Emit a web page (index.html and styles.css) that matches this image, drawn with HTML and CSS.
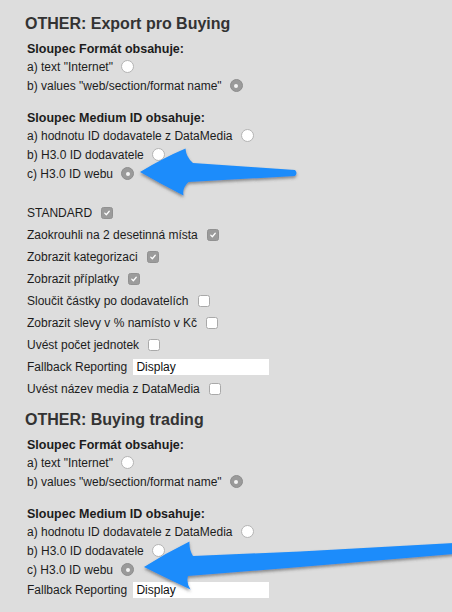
FILE: index.html
```html
<!DOCTYPE html>
<html lang="cs">
<head>
<meta charset="utf-8">
<title>OTHER</title>
<link rel="stylesheet" href="styles.css">
</head>
<body>
<div class="page">
  <section class="block">
    <h2 class="title">OTHER: Export pro Buying</h2>
    <div class="group">
      <div class="group-title">Sloupec Formát obsahuje:</div>
      <div class="opt">a) text "Internet" <span class="radio"></span></div>
      <div class="opt">b) values "web/section/format name" <span class="radio on"></span></div>
    </div>
    <div class="group">
      <div class="group-title">Sloupec Medium ID obsahuje:</div>
      <div class="opt">a) hodnotu ID dodavatele z DataMedia <span class="radio"></span></div>
      <div class="opt">b) H3.0 ID dodavatele <span class="radio"></span></div>
      <div class="opt">c) H3.0 ID webu <span class="radio on"></span></div>
    </div>
    <div class="checks">
      <div class="chk-row">STANDARD <span class="cb on"><svg viewBox="0 0 12 12"><path d="M3.3 6.2 L5.2 8.1 L8.7 3.9"/></svg></span></div>
      <div class="chk-row">Zaokrouhli na 2 desetinná místa <span class="cb on"><svg viewBox="0 0 12 12"><path d="M3.3 6.2 L5.2 8.1 L8.7 3.9"/></svg></span></div>
      <div class="chk-row">Zobrazit kategorizaci <span class="cb on"><svg viewBox="0 0 12 12"><path d="M3.3 6.2 L5.2 8.1 L8.7 3.9"/></svg></span></div>
      <div class="chk-row">Zobrazit příplatky <span class="cb on"><svg viewBox="0 0 12 12"><path d="M3.3 6.2 L5.2 8.1 L8.7 3.9"/></svg></span></div>
      <div class="chk-row">Sloučit částky po dodavatelích <span class="cb"></span></div>
      <div class="chk-row">Zobrazit slevy v % namísto v Kč <span class="cb"></span></div>
      <div class="chk-row">Uvést počet jednotek <span class="cb"></span></div>
      <div class="chk-row field-row">Fallback Reporting <span class="field">Display</span></div>
      <div class="chk-row">Uvést název media z DataMedia <span class="cb"></span></div>
    </div>
  </section>

  <section class="block second">
    <h2 class="title">OTHER: Buying trading</h2>
    <div class="group">
      <div class="group-title">Sloupec Formát obsahuje:</div>
      <div class="opt">a) text "Internet" <span class="radio"></span></div>
      <div class="opt">b) values "web/section/format name" <span class="radio on"></span></div>
    </div>
    <div class="group">
      <div class="group-title">Sloupec Medium ID obsahuje:</div>
      <div class="opt">a) hodnotu ID dodavatele z DataMedia <span class="radio"></span></div>
      <div class="opt">b) H3.0 ID dodavatele <span class="radio"></span></div>
      <div class="opt">c) H3.0 ID webu <span class="radio on"></span></div>
      <div class="chk-row field-row">Fallback Reporting <span class="field">Display</span></div>
    </div>
  </section>

  <svg class="arrows" viewBox="0 0 452 612" width="452" height="612">
    <defs>
      <filter id="sh" x="-10%" y="-30%" width="120%" height="160%">
        <feDropShadow dx="0" dy="2" stdDeviation="1.4" flood-color="#444" flood-opacity="0.55"/>
      </filter>
    </defs>
    <path class="arrow" filter="url(#sh)" d="M140 172 Q163 158 185.5 148.5 Q186 157 193 163 L295 170 Q298 173 295 176 L188.5 182 Q182 188 183.5 195.5 Q161 184 140 172 Z"/>
    <path class="arrow" filter="url(#sh)" d="M144 567 Q166 553 189.5 541.5 Q189 550 193 556 L300 551.5 L454 543 L454 554 L300 567 L188 576 Q186 583 190.5 589.5 Q166 578 144 567 Z"/>
  </svg>
</div>
</body>
</html>
```

FILE: styles.css
```css
html, body {
  margin: 0;
  padding: 0;
  background: #dddddd;
}

body {
  font-family: "Liberation Sans", Arial, Helvetica, sans-serif;
  color: #1c1c1c;
  font-size: 12px;
}

.page {
  position: relative;
  width: 452px;
  height: 612px;
  overflow: hidden;
  box-sizing: border-box;
  padding: 14px 0 0 25px;
}

.block.second {
  margin-top: 10px;
}

.title {
  margin: 0;
  font-size: 16px;
  line-height: 20px;
  font-weight: bold;
  color: #333333;
}

.group {
  margin-top: 8px;
  padding-left: 2px;
}

.group + .group {
  margin-top: 16px;
}

.group-title {
  font-size: 12.5px;
  line-height: 15px;
  font-weight: bold;
  color: #1c1c1c;
}

.opt {
  height: 19px;
  display: flex;
  align-items: center;
  gap: 5px;
  white-space: pre;
}

.radio {
  width: 11px;
  height: 11px;
  border-radius: 50%;
  background: #ffffff;
  border: 1px solid #b4b4b4;
  display: flex;
  align-items: center;
  justify-content: center;
  flex: none;
}

.radio.on {
  background: #9a9a9a;
  border-color: #8d8d8d;
}

.radio.on::after {
  content: "";
  width: 4px;
  height: 4px;
  border-radius: 50%;
  background: #f4f4f4;
}

.checks {
  margin-top: 19px;
  padding-left: 2px;
}

.chk-row {
  height: 22px;
  display: flex;
  align-items: center;
  gap: 6px;
  white-space: pre;
}

.cb {
  width: 10px;
  height: 10px;
  border-radius: 2.5px;
  border: 1px solid #a9a9a9;
  background: #ffffff;
  display: flex;
  flex: none;
}

.cb.on {
  background: #9b9b9b;
  border-color: #919191;
}

.cb svg {
  width: 10px;
  height: 10px;
}

.cb svg path {
  fill: none;
  stroke: #ffffff;
  stroke-width: 1.5;
  stroke-linecap: round;
  stroke-linejoin: round;
}

.field-row {
  gap: 3px;
}

.field {
  width: 133px;
  height: 16px;
  line-height: 16px;
  padding-left: 3px;
  background: #ffffff;
  font-size: 12px;
  color: #111111;
}

.arrows {
  position: absolute;
  left: 0;
  top: 0;
  pointer-events: none;
}

.arrow {
  fill: #1b8cfb;
}
```
